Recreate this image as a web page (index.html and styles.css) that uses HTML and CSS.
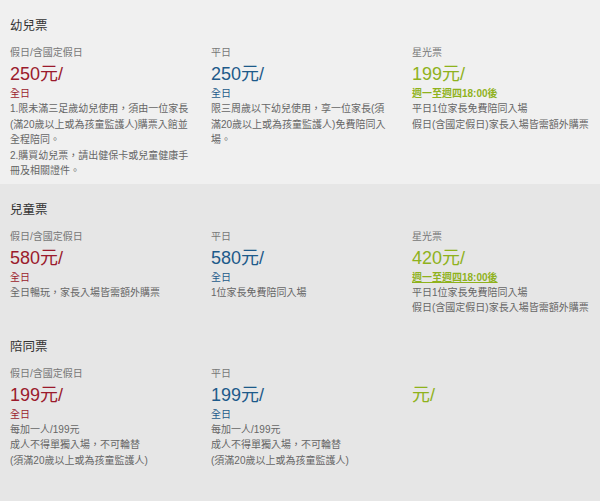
FILE: index.html
```html
<!DOCTYPE html>
<html lang="zh-Hant">
<head>
<meta charset="utf-8">
<link rel="stylesheet" href="styles.css">
</head>
<body>
<section class="sec sec-light">
  <h2 class="title">幼兒票</h2>
  <div class="cols">
    <div class="col">
      <div class="label">假日/含國定假日</div>
      <div class="price red">250元/</div>
      <div class="sub red">全日</div>
      <p class="desc">1.限未滿三足歲幼兒使用，須由一位家長<br>(滿20歲以上或為孩童監護人)購票入館並<br>全程陪同。<br>2.購買幼兒票，請出健保卡或兒童健康手<br>冊及相關證件。</p>
    </div>
    <div class="col">
      <div class="label">平日</div>
      <div class="price blue">250元/</div>
      <div class="sub blue">全日</div>
      <p class="desc">限三周歲以下幼兒使用，享一位家長(須<br>滿20歲以上或為孩童監護人)免費陪同入<br>場。</p>
    </div>
    <div class="col">
      <div class="label">星光票</div>
      <div class="price green">199元/</div>
      <div class="sub green strong">週一至週四18:00後</div>
      <p class="desc">平日1位家長免費陪同入場<br>假日(含國定假日)家長入場皆需額外購票</p>
    </div>
  </div>
</section>
<section class="sec sec-dark">
  <h2 class="title">兒童票</h2>
  <div class="cols">
    <div class="col">
      <div class="label">假日/含國定假日</div>
      <div class="price red">580元/</div>
      <div class="sub red">全日</div>
      <p class="desc">全日暢玩，家長入場皆需額外購票</p>
    </div>
    <div class="col">
      <div class="label">平日</div>
      <div class="price blue">580元/</div>
      <div class="sub blue">全日</div>
      <p class="desc">1位家長免費陪同入場</p>
    </div>
    <div class="col">
      <div class="label">星光票</div>
      <div class="price green">420元/</div>
      <div class="sub green strong under">週一至週四18:00後</div>
      <p class="desc">平日1位家長免費陪同入場<br>假日(含國定假日)家長入場皆需額外購票</p>
    </div>
  </div>
</section>
<section class="sec sec-dark sec-last">
  <h2 class="title">陪同票</h2>
  <div class="cols">
    <div class="col">
      <div class="label">假日/含國定假日</div>
      <div class="price red">199元/</div>
      <div class="sub red">全日</div>
      <p class="desc">每加一人/199元<br>成人不得單獨入場，不可輪替<br>(須滿20歲以上或為孩童監護人)</p>
    </div>
    <div class="col">
      <div class="label">平日</div>
      <div class="price blue">199元/</div>
      <div class="sub blue">全日</div>
      <p class="desc">每加一人/199元<br>成人不得單獨入場，不可輪替<br>(須滿20歲以上或為孩童監護人)</p>
    </div>
    <div class="col">
      <div class="label">&nbsp;</div>
      <div class="price green">元/</div>
    </div>
  </div>
</section>
</body>
</html>
```
FILE: styles.css
```css
html, body {
  margin: 0;
  padding: 0;
}
body {
  width: 600px;
  height: 501px;
  background: #e6e6e6;
  font-family: "Liberation Sans", "Noto Sans CJK TC", sans-serif;
  color: #666;
  overflow: hidden;
}
.sec {
  padding: 18px 10px 5px;
}
.sec-light {
  background: #f0f0f0;
}
.sec-dark {
  background: #e6e6e6;
}
.sec-last {
  padding-bottom: 40px;
}
.title {
  margin: 0;
  font-size: 12.5px;
  line-height: 16px;
  font-weight: normal;
  color: #333;
}
.cols {
  display: grid;
  grid-template-columns: 201px 201px 1fr;
  margin-top: 12px;
}
.label {
  font-size: 10px;
  line-height: 14px;
  color: #777;
}
.price {
  margin-top: 3px;
  font-size: 18px;
  line-height: 22px;
}
.sub {
  margin-top: 2px;
  font-size: 10px;
  line-height: 14px;
  font-weight: normal;
}
.strong {
  font-weight: bold;
}
.under {
  text-decoration: underline;
}
.red { color: #9b1a2c; }
.blue { color: #1d5a8a; }
.green { color: #8fb21c; }
.desc {
  margin: 0;
  font-size: 10px;
  line-height: 15.5px;
  color: #666;
  white-space: nowrap;
}
```
